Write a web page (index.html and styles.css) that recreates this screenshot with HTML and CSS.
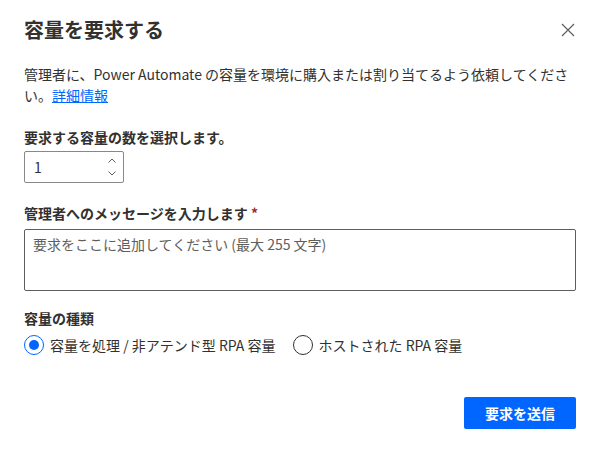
FILE: index.html
```html
<!DOCTYPE html>
<html lang="ja">
<head>
<meta charset="utf-8">
<link rel="stylesheet" href="styles.css">
</head>
<body>
<div class="dialog">
  <div class="header">
    <h1 class="title">容量を要求する</h1>
    <button class="close" aria-label="閉じる">
      <svg width="14" height="14" viewBox="0 0 14 14"><path d="M1 1L13 13M13 1L1 13" stroke="#605e5c" stroke-width="1.2" fill="none"/></svg>
    </button>
  </div>
  <p class="desc">管理者に、Power Automate の容量を環境に購入または割り当てるよう依頼してください。<a href="#" class="link">詳細情報</a></p>

  <div class="label label-first">要求する容量の数を選択します。</div>
  <div class="spin">
    <span class="spin-value">1</span>
    <span class="spin-arrows">
      <svg width="8" height="5" viewBox="0 0 8 5"><path d="M0.5 4.5L4 1L7.5 4.5" stroke="#605e5c" stroke-width="1" fill="none"/></svg>
      <svg width="8" height="5" viewBox="0 0 8 5"><path d="M0.5 0.5L4 4L7.5 0.5" stroke="#605e5c" stroke-width="1" fill="none"/></svg>
    </span>
  </div>

  <div class="label label-msg">管理者へのメッセージを入力します <span class="req">*</span></div>
  <div class="textarea"><span class="placeholder">要求をここに追加してください (最大 255 文字)</span></div>

  <div class="label label-type">容量の種類</div>
  <div class="radios">
    <div class="radio">
      <span class="circle checked"><span class="dot"></span></span>
      <span class="radio-text">容量を処理 / 非アテンド型 RPA 容量</span>
    </div>
    <div class="radio">
      <span class="circle"></span>
      <span class="radio-text">ホストされた RPA 容量</span>
    </div>
  </div>

  <div class="footer">
    <button class="primary">要求を送信</button>
  </div>
</div>
</body>
</html>
```
FILE: styles.css
```css
html, body {
  margin: 0;
  padding: 0;
  background: #ffffff;
}
body {
  font-family: "Segoe UI", "Noto Sans CJK JP", "Noto Sans", sans-serif;
  color: #323130;
  font-size: 14px;
}
.dialog {
  width: 598px;
  height: 450px;
  box-sizing: border-box;
  padding: 16px 22px 0 24px;
  display: flex;
  flex-direction: column;
}
.header {
  display: flex;
  justify-content: space-between;
  align-items: center;
  height: 28px;
}
.title {
  margin: 0;
  font-size: 20px;
  font-weight: 600;
  line-height: 28px;
  color: #323130;
}
.close {
  border: none;
  background: none;
  padding: 0;
  margin-right: 1px;
  width: 14px;
  height: 14px;
  display: flex;
}
.desc {
  margin: 20px 0 0 0;
  line-height: 21px;
  font-size: 14px;
  color: #323130;
}
.link {
  color: #0066ff;
  text-decoration: underline;
}
.label {
  font-weight: 600;
  line-height: 20px;
  font-size: 14px;
  color: #323130;
}
.label-first { margin-top: 21px; }
.label-msg { margin-top: 20px; }
.label-type { margin-top: 17px; }
.req { color: #a4262c; }
.spin {
  margin-top: 4px;
  width: 100px;
  height: 32px;
  box-sizing: border-box;
  border: 1px solid #8a8886;
  border-radius: 2px;
  display: flex;
  align-items: center;
  justify-content: space-between;
  padding: 0 7px 0 9px;
}
.spin-value {
  color: #323130;
  font-size: 14px;
}
.spin-arrows {
  display: flex;
  flex-direction: column;
  gap: 8px;
}
.spin-arrows svg { display: block; }
.textarea {
  margin-top: 6px;
  margin-right: 0;
  height: 62px;
  box-sizing: border-box;
  border: 1px solid #605e5c;
  border-radius: 2px;
  padding: 4px 8px;
  line-height: 20px;
}
.placeholder {
  color: #605e5c;
}
.radios {
  margin-top: 7px;
  display: flex;
  gap: 17px;
  height: 20px;
  align-items: center;
}
.radio {
  display: flex;
  align-items: center;
  gap: 6px;
}
.circle {
  width: 20px;
  height: 20px;
  box-sizing: border-box;
  border: 1px solid #323130;
  border-radius: 50%;
  display: flex;
  align-items: center;
  justify-content: center;
}
.circle.checked {
  border-color: #0066ff;
}
.dot {
  width: 10px;
  height: 10px;
  border-radius: 50%;
  background: #0066ff;
}
.radio-text {
  line-height: 20px;
  color: #323130;
}
.footer {
  margin-top: 42px;
  display: flex;
  justify-content: flex-end;
}
.primary {
  width: 112px;
  height: 32px;
  border: none;
  border-radius: 2px;
  background: #0066ff;
  color: #ffffff;
  font-family: inherit;
  font-size: 14px;
  font-weight: 600;
}
```
